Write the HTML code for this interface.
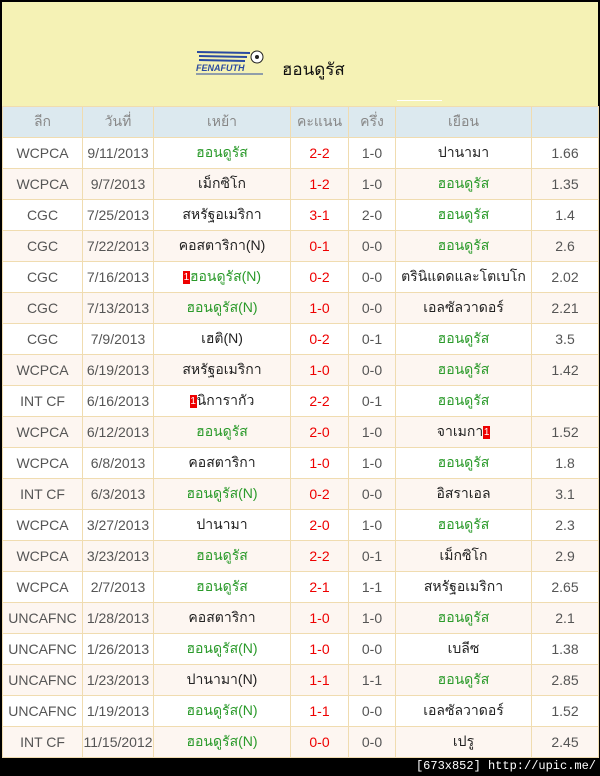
<!DOCTYPE html>
<html><head><meta charset="utf-8"><style>
body{margin:0;background:#000;width:600px;height:776px;overflow:hidden;font-family:"Liberation Sans",sans-serif}
.wrap{position:absolute;left:2px;top:2px;width:596px;height:755px;background:#fff}
.hd{height:104px;background:#f5f2b5;position:relative}
.logo{position:absolute;left:193px;top:46px;width:72px;height:28px}
.title{position:absolute;left:280px;top:54px;font-size:17px;color:#111}
.line{position:absolute;left:395px;top:98px;width:45px;height:1px;background:#fff}
table{border-collapse:collapse;width:596px;table-layout:fixed}
td,th{border:1px solid #f0dcb0;text-align:center;height:30px;padding:0;font-size:14px;color:#555}
th{background:#dce9ef;font-weight:normal;color:#888;font-size:14px}
tr:nth-child(odd) td{background:#fdf6f1}
.t{color:#222}
.g{color:#2a9a2a}
.r{color:#e00}
.b{display:inline-block;background:#e00;color:#fff;font-size:10px;width:7px;height:13px;line-height:13px;vertical-align:middle}
.foot{position:absolute;right:4px;top:759px;color:#fff;font-family:"Liberation Mono",monospace;font-size:12px}
</style></head><body>
<div class="wrap">
<div class="hd">
<svg class="logo" viewBox="0 0 72 28"><g stroke="#2a4aa0" stroke-width="2"><line x1="2" y1="4" x2="55" y2="5"/><line x1="4" y1="8" x2="52" y2="9"/><line x1="4" y1="12" x2="50" y2="13"/></g><circle cx="62" cy="9" r="6" fill="#fff" stroke="#222"/><circle cx="62" cy="9" r="2" fill="#222"/><text x="1" y="23" font-size="9" font-weight="bold" font-style="italic" fill="#2a4aa0" font-family="Liberation Sans">FENAFUTH</text><line x1="1" y1="26" x2="68" y2="26" stroke="#2a4aa0"/></svg>
<div class="title">ฮอนดูรัส</div>
<div class="line"></div>
</div>
<table>
<colgroup><col style="width:80px"><col style="width:71px"><col style="width:137px"><col style="width:58px"><col style="width:47px"><col style="width:136px"><col style="width:67px"></colgroup>
<tr><th>ลีก</th><th>วันที่</th><th>เหย้า</th><th>คะแนน</th><th>ครึ่ง</th><th>เยือน</th><th></th></tr>
<tr><td>WCPCA</td><td>9/11/2013</td><td class="g">ฮอนดูรัส</td><td class="r">2-2</td><td>1-0</td><td class="t">ปานามา</td><td>1.66</td></tr>
<tr><td>WCPCA</td><td>9/7/2013</td><td class="t">เม็กซิโก</td><td class="r">1-2</td><td>1-0</td><td class="g">ฮอนดูรัส</td><td>1.35</td></tr>
<tr><td>CGC</td><td>7/25/2013</td><td class="t">สหรัฐอเมริกา</td><td class="r">3-1</td><td>2-0</td><td class="g">ฮอนดูรัส</td><td>1.4</td></tr>
<tr><td>CGC</td><td>7/22/2013</td><td class="t">คอสตาริกา(N)</td><td class="r">0-1</td><td>0-0</td><td class="g">ฮอนดูรัส</td><td>2.6</td></tr>
<tr><td>CGC</td><td>7/16/2013</td><td class="g"><span class="b">1</span>ฮอนดูรัส(N)</td><td class="r">0-2</td><td>0-0</td><td class="t">ตรินิแดดและโตเบโก</td><td>2.02</td></tr>
<tr><td>CGC</td><td>7/13/2013</td><td class="g">ฮอนดูรัส(N)</td><td class="r">1-0</td><td>0-0</td><td class="t">เอลซัลวาดอร์</td><td>2.21</td></tr>
<tr><td>CGC</td><td>7/9/2013</td><td class="t">เฮติ(N)</td><td class="r">0-2</td><td>0-1</td><td class="g">ฮอนดูรัส</td><td>3.5</td></tr>
<tr><td>WCPCA</td><td>6/19/2013</td><td class="t">สหรัฐอเมริกา</td><td class="r">1-0</td><td>0-0</td><td class="g">ฮอนดูรัส</td><td>1.42</td></tr>
<tr><td>INT CF</td><td>6/16/2013</td><td class="t"><span class="b">1</span>นิการากัว</td><td class="r">2-2</td><td>0-1</td><td class="g">ฮอนดูรัส</td><td></td></tr>
<tr><td>WCPCA</td><td>6/12/2013</td><td class="g">ฮอนดูรัส</td><td class="r">2-0</td><td>1-0</td><td class="t">จาเมกา<span class="b">1</span></td><td>1.52</td></tr>
<tr><td>WCPCA</td><td>6/8/2013</td><td class="t">คอสตาริกา</td><td class="r">1-0</td><td>1-0</td><td class="g">ฮอนดูรัส</td><td>1.8</td></tr>
<tr><td>INT CF</td><td>6/3/2013</td><td class="g">ฮอนดูรัส(N)</td><td class="r">0-2</td><td>0-0</td><td class="t">อิสราเอล</td><td>3.1</td></tr>
<tr><td>WCPCA</td><td>3/27/2013</td><td class="t">ปานามา</td><td class="r">2-0</td><td>1-0</td><td class="g">ฮอนดูรัส</td><td>2.3</td></tr>
<tr><td>WCPCA</td><td>3/23/2013</td><td class="g">ฮอนดูรัส</td><td class="r">2-2</td><td>0-1</td><td class="t">เม็กซิโก</td><td>2.9</td></tr>
<tr><td>WCPCA</td><td>2/7/2013</td><td class="g">ฮอนดูรัส</td><td class="r">2-1</td><td>1-1</td><td class="t">สหรัฐอเมริกา</td><td>2.65</td></tr>
<tr><td>UNCAFNC</td><td>1/28/2013</td><td class="t">คอสตาริกา</td><td class="r">1-0</td><td>1-0</td><td class="g">ฮอนดูรัส</td><td>2.1</td></tr>
<tr><td>UNCAFNC</td><td>1/26/2013</td><td class="g">ฮอนดูรัส(N)</td><td class="r">1-0</td><td>0-0</td><td class="t">เบลีซ</td><td>1.38</td></tr>
<tr><td>UNCAFNC</td><td>1/23/2013</td><td class="t">ปานามา(N)</td><td class="r">1-1</td><td>1-1</td><td class="g">ฮอนดูรัส</td><td>2.85</td></tr>
<tr><td>UNCAFNC</td><td>1/19/2013</td><td class="g">ฮอนดูรัส(N)</td><td class="r">1-1</td><td>0-0</td><td class="t">เอลซัลวาดอร์</td><td>1.52</td></tr>
<tr><td>INT CF</td><td>11/15/2012</td><td class="g">ฮอนดูรัส(N)</td><td class="r">0-0</td><td>0-0</td><td class="t">เปรู</td><td>2.45</td></tr>
</table>
</div>
<div class="foot">[673x852] http://upic.me/</div>
</body></html>
